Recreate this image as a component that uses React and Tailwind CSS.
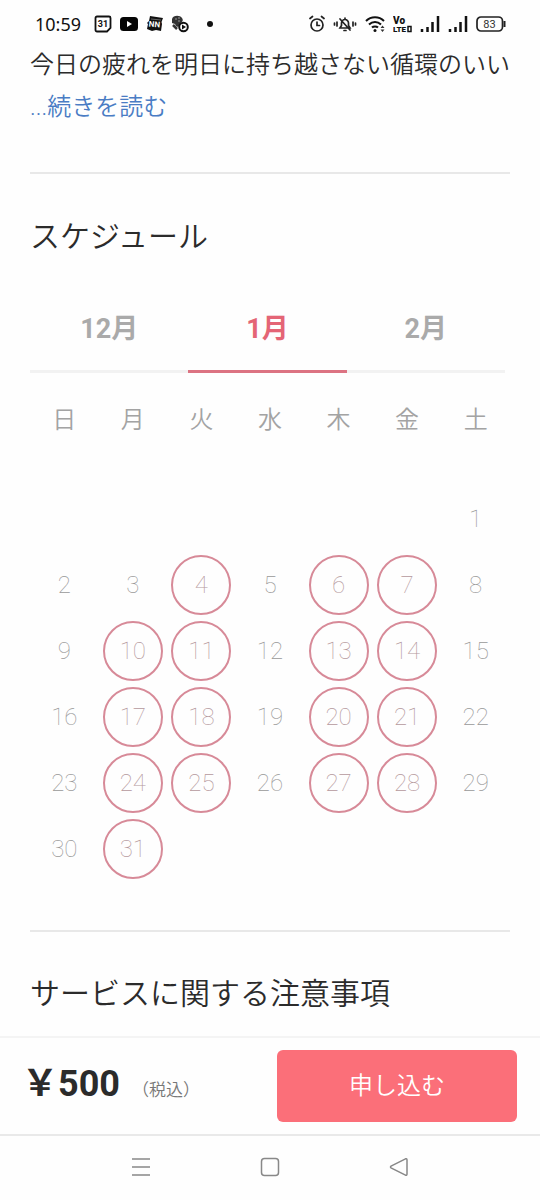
import { useState } from 'react';

const MONTHS = ['12月', '1月', '2月'];
const WEEKDAYS = ['日', '月', '火', '水', '木', '金', '土'];
const OPEN_DAYS = [4, 6, 7, 10, 11, 13, 14, 17, 18, 20, 21, 24, 25, 27, 28, 31];
const WEEKS = [
  [null, null, null, null, null, null, 1],
  [2, 3, 4, 5, 6, 7, 8],
  [9, 10, 11, 12, 13, 14, 15],
  [16, 17, 18, 19, 20, 21, 22],
  [23, 24, 25, 26, 27, 28, 29],
  [30, 31, null, null, null, null, null],
];

function CalendarIcon() {
  return (
    <svg width="18" height="18" viewBox="0 0 18 18" fill="none" stroke="#111">
      <path d="M3 1.5h12a1.5 1.5 0 0 1 1.5 1.5v10l-3.500 3.500H3A1.500 1.500 0 0 1 1.500 15V3A1.500 1.500 0 0 1 3 1.500z" strokeWidth="1.800" />
      <text x="9" y="12" textAnchor="middle" fontSize="9" fontWeight="700" fill="#111" stroke="none">31</text>
    </svg>
  );
}

function VideoIcon() {
  return (
    <svg width="18" height="14" viewBox="0 0 18 14">
      <rect width="18" height="14" rx="3.500" fill="#050505" />
      <path d="M7 4l5 3-5 3z" fill="#fff" />
    </svg>
  );
}

function NewsIcon() {
  return (
    <svg width="17" height="18" viewBox="0 0 17 18">
      <path d="M4 1l13 2-1.500 4 .5 2-1 7-5-1-4 1-5-2 1-5-1-1 2-2z" fill="#111" />
      <path d="M5 4l10 1" stroke="#888" strokeWidth=".7" />
      <text x="8.500" y="12" textAnchor="middle" fontSize="8" fontWeight="700" fill="#fff" transform="rotate(5 8 9)">NN</text>
    </svg>
  );
}

function GameIcon() {
  return (
    <svg width="18" height="18" viewBox="0 0 18 18">
      <path d="M1 4c1-4 8-4 10-1 1 1 1 3 0 4l-4 5-2-1-1-2-3-1z" fill="#333" />
      <path d="M4 4h2M7 3h2M7 6h2" stroke="#999" />
      <path d="M2 10l4 4" stroke="#333" strokeWidth="2.500" />
      <circle cx="12.500" cy="12" r="4.300" fill="#fff" stroke="#111" strokeWidth="2" />
      <path d="M11 9.500l4 2.500-4 2.500z" fill="#111" />
    </svg>
  );
}

function AlarmIcon() {
  return (
    <svg width="16" height="18" viewBox="0 0 16 18" fill="none" stroke="#222" strokeWidth="1.700" strokeLinecap="round">
      <circle cx="8" cy="10" r="6" />
      <path d="M8 7v3.500h2.500M1 3.500L3.500 1.500M15 3.500L12.500 1.500" />
    </svg>
  );
}

function MutedBellIcon() {
  return (
    <svg width="24" height="18" viewBox="0 0 24 18" fill="none" stroke="#222" strokeWidth="1.700" strokeLinecap="round">
      <path d="M7 13h10l-1.500-2.500V8a3.500 3.500 0 0 0-7 0v2.500zM12 4.500V3M11 15.500h2M7 4l10 11M4 7v4M1.500 8v2M20 7v4M22.500 8v2" />
    </svg>
  );
}

function WifiIcon() {
  return (
    <svg width="20" height="18" viewBox="0 0 20 18" fill="none" stroke="#111" strokeWidth="2">
      <path d="M1 6c5-5 13-5 18 0M4 9.500c3.500-3.500 8.500-3.500 12 0M7 12.500c1.500-1.500 4.500-1.500 6 0" />
      <circle cx="10" cy="15.500" r="1.500" fill="#111" stroke="none" />
      <path d="M15.500 13l2-2.500 2 2.500zM15.500 14.500l2 2.500 2-2.500z" fill="#333" stroke="none" />
    </svg>
  );
}

function SignalIcon() {
  return (
    <svg width="20" height="16" viewBox="0 0 20 16" stroke="#111" strokeWidth="2.500">
      <path d="M2 16v-3M7.500 16v-5M12.500 16V6M18 16V0" />
    </svg>
  );
}

function VolteIcon() {
  return (
    <svg width="19" height="17" viewBox="0 0 19 17" fontWeight="900" fill="#111">
      <text x="0" y="8" fontSize="10">Vo</text>
      <text x="0" y="16" fontSize="8">LTE</text>
      <rect x="15" y="10.500" width="3" height="5" fill="#fff" stroke="#111" strokeWidth="1.500" />
    </svg>
  );
}

function BatteryIcon() {
  return (
    <svg width="30" height="16" viewBox="0 0 30 16" fill="none" stroke="#222" strokeWidth="1.700">
      <rect x="1" y="1" width="25.500" height="14" rx="4" />
      <path d="M28.500 5v6" strokeWidth="2" />
      <text x="13.500" y="12" textAnchor="middle" fontSize="11" fill="#333" stroke="none">83</text>
    </svg>
  );
}

function StatusBar() {
  return (
    <header className="flex h-11 items-center justify-between pl-[35px] pr-[34px] pt-1 text-[#111]">
      <div className="flex items-center">
        <time className="w-[59px] font-['Noto_Sans',sans-serif] text-[18px] leading-6">10:59</time>
        <div className="flex items-center gap-2">
          <CalendarIcon />
          <VideoIcon />
          <NewsIcon />
          <GameIcon />
        </div>
        <span className="ml-[18px] size-[6px] rounded-full bg-[#111]" />
      </div>
      <div className="flex items-center gap-2">
        <AlarmIcon />
        <MutedBellIcon />
        <WifiIcon />
        <VolteIcon />
        <SignalIcon />
        <SignalIcon />
        <BatteryIcon />
      </div>
    </header>
  );
}

function MonthTabs({ active, onChange }) {
  return (
    <div role="tablist" className="mr-[5px] mt-7 grid grid-cols-3">
      {MONTHS.map(month => (
        <button
          key={month}
          type="button"
          role="tab"
          aria-selected={month === active}
          onClick={() => onChange(month)}
          className={`flex h-[85px] items-center justify-center border-b-[3px] text-[27px] font-bold ${month === active ? 'border-[#dc7382] text-[#e46576]' : 'border-[#f2f2f2] text-[#aaaaaa]'}`}
        >
          {month}
        </button>
      ))}
    </div>
  );
}

function Day({ day }) {
  if (!day) return null;
  if (!OPEN_DAYS.includes(day)) return <span>{day}</span>;
  return (
    <button type="button" className="mx-auto flex size-[60px] items-center justify-center rounded-full border-2 border-[#d78a98] text-[#b5999d]">
      {day}
    </button>
  );
}

function Calendar() {
  return (
    <table className="mt-[15px] w-full table-fixed text-center text-[24px]">
      <thead>
        <tr>
          {WEEKDAYS.map(name => (
            <th key={name} scope="col" className="h-[64px] p-0 font-[350] text-[#a3a3a3]">{name}</th>
          ))}
        </tr>
        <tr aria-hidden="true"><td colSpan={7} className="h-[34px] p-0" /></tr>
      </thead>
      <tbody>
        {WEEKS.map((week, i) => (
          <tr key={i}>
            {week.map((day, j) => (
              <td key={j} className="h-[66px] p-0 font-thin text-[#999]"><Day day={day} /></td>
            ))}
          </tr>
        ))}
      </tbody>
    </table>
  );
}

function BottomBar() {
  return (
    <footer className="mt-auto">
      <div className="flex items-center justify-between border-t-2 border-[#f4f4f4] py-3 pl-[22px] pr-[23px]">
        <p className="flex items-baseline gap-3 pb-1 text-[#2b2b2b]">
          <span className="text-[36px] font-bold leading-[48px]">￥500</span>
          <span className="text-[17px] font-[350] text-[#777]">（税込）</span>
        </p>
        <button type="button" className="h-[72px] w-1/2 max-w-[240px] rounded-[6px] bg-[#fb6f79] text-[24px] font-[350] text-white">申し込む</button>
      </div>
      <nav className="flex h-[66px] justify-center border-t-2 border-[#e9e9e9] pb-0.5">
        <button type="button" aria-label="メニュー" className="flex w-[129px] items-center justify-center">
          <svg width="20" height="20" viewBox="0 0 20 20" stroke="#888" strokeWidth="1.500"><path d="M1 2h18M1 10h18M1 18h18" /></svg>
        </button>
        <button type="button" aria-label="ホーム" className="flex w-[129px] items-center justify-center">
          <svg width="20" height="20" viewBox="0 0 20 20" fill="none" stroke="#888" strokeWidth="1.500"><rect x="1.500" y="1.500" width="17" height="17" rx="3" /></svg>
        </button>
        <button type="button" aria-label="戻る" className="flex w-[129px] items-center justify-center">
          <svg width="20" height="20" viewBox="0 0 20 20" fill="none" stroke="#888" strokeWidth="1.500" strokeLinejoin="round"><path d="M2 9.200L16.500 1.800Q18 1.200 18 3v14q0 1.800-1.500 1.200L2 10.800q-1-.8 0-1.600z" /></svg>
        </button>
      </nav>
    </footer>
  );
}

export default function App() {
  const [month, setMonth] = useState('1月');

  return (
    <div className="flex min-h-screen flex-col bg-[#fefefe] font-['Roboto','Noto_Sans_CJK_JP',sans-serif]" lang="ja">
      <StatusBar />
      <main className="px-[30px] text-[#2b2b2b]">
        <p className="text-[24px] font-[350] leading-[42px]">
          今日の疲れを明日に持ち越さない循環のいい<br />
          <a href="#more" className="text-[#4a7cc4]">...続きを読む</a>
        </p>

        <section className="mt-11 border-t-2 border-[#e8e8e8] pt-10">
          <h2 className="text-[30px] font-[350] leading-[46px]">スケジュール</h2>
          <MonthTabs active={month} onChange={setMonth} />
          <Calendar />
        </section>

        <section className="mt-12 border-t-2 border-[#e8e8e8] pt-10">
          <h2 className="text-[30px] font-[350] leading-[44px]">サービスに関する注意事項</h2>
        </section>
      </main>
      <BottomBar />
    </div>
  );
}
